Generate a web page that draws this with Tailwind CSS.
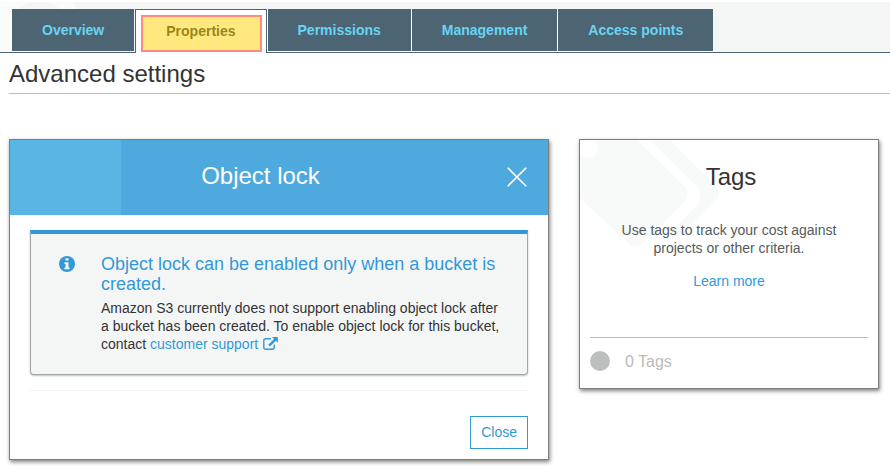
<!DOCTYPE html>
<html lang="en">
<head>
  <meta charset="UTF-8">
  <meta name="viewport" content="width=device-width, initial-scale=1.0" />
  <script src="https://cdn.jsdelivr.net/npm/@tailwindcss/browser@4"></script>
  <title>Bucket properties</title>
</head>
<body class="min-h-screen bg-white font-['Liberation_Sans',Arial,sans-serif] text-sm text-[#333333]">
<header class="relative mt-[2px] border-b border-[#4d6472] bg-[#f4f6f6]">
  <!-- bucket watermark behind the tabs -->
  <svg class="absolute top-0 left-0" width="84" height="50" viewBox="0 0 84 50" aria-hidden="true">
    <path d="M0 0H76Q83 4 82 12V50H0Z" fill="#fafcfb"/>
    <path d="M18 7Q23 2 31 0H47Q55 2 60 7Z" fill="#f4f6f6"/>
    <path d="M71 0Q76 3 76 7H82Q82 3 79 0Z" fill="#f4f6f6"/>
  </svg>
  <nav class="relative flex pt-[7px] pl-3 text-center font-bold text-[#68d4f4]">
    <a href="#" class="mr-px mb-px h-[42px] bg-[#4d6472] px-[30px] leading-[42px]">Overview</a>
    <a href="#" aria-current="page" class="-mb-px h-11 border border-b-0 border-[#4d6472] bg-white pt-[5px] pr-1 pl-[5px] text-[#998619]">
      <span class="block h-[37px] border-2 border-[#ff8a80] bg-[#ffe97f] pr-6 pl-[23px] leading-[29px]">Properties</span>
    </a>
    <div class="flex flex-wrap gap-px border-b border-white bg-white pl-px">
      <a href="#" class="bg-[#4d6472] px-[30px] leading-[42px]">Permissions</a>
      <a href="#" class="bg-[#4d6472] px-[30px] leading-[42px]">Management</a>
      <a href="#" class="bg-[#4d6472] px-[30px] leading-[42px]">Access points</a>
    </div>
  </nav>
</header>

<h1 class="ml-[9px] border-b border-[#bbbbbb] pt-1.5 pb-1 text-2xl leading-[30px]">Advanced settings</h1>

<main class="flex items-start gap-[30px] pt-[45px] pr-[11px] pb-2.5 pl-[9px]">
  <section class="flex-1 border border-[#7d7d7d] bg-white shadow-[1px_2px_4px_rgba(0,0,0,0.5)]">
    <div class="relative flex h-[75px] items-center bg-[#4ea9de] pr-[21px] pl-1 text-white">
      <div class="absolute inset-y-0 left-0 w-[111px] bg-[#58b5e4]"></div>
      <h2 class="relative flex-1 pb-1 text-center text-2xl">Object lock</h2>
      <button type="button" aria-label="Close panel" class="pb-0.5">
        <svg width="20" height="20" viewBox="0 0 20 20" fill="none" stroke="currentColor" stroke-width="1.6"><path d="M.8.8 19.2 19.2M19.2.8.8 19.2"/></svg>
      </button>
    </div>
    <div class="px-5 pt-[15px] pb-2.5">
      <div class="flex rounded-b border border-t-4 border-[#a1a6a6] border-t-[#3199d8] bg-[#f4f6f6] pt-5 pr-5 pb-[21px] pl-7 shadow-[0_1px_2px_rgba(0,0,0,0.25)]">
        <svg class="mt-0.5 mr-[26px] shrink-0" width="16" height="16" viewBox="0 0 16 16" aria-hidden="true">
          <circle cx="8" cy="8" r="8" fill="#3199d8"/>
          <path d="M6.5 2.2h3v2.4h-3zM5.4 6.2h4.1v5.2h1.1v1.8H5.4v-1.8h1.2V8H5.4z" fill="#f4f6f6"/>
        </svg>
        <div>
          <h3 class="mb-[5px] text-lg leading-5 text-[#3199d8]">Object lock can be enabled only when a bucket is created.</h3>
          <p class="leading-[18px]">Amazon S3 currently does not support enabling object lock after a bucket has been created. To enable object lock for this bucket, contact <a href="#" class="text-[#3199d8]">customer support<svg class="ml-[5px] inline align-[-1px]" width="15" height="13" viewBox="0 0 15 13" aria-hidden="true">
              <path d="M8 1.7H2.8Q.8 1.7.8 3.7v6.5q0 2 2 2h6.4q2 0 2-2V7.6" fill="none" stroke="#3199d8" stroke-width="1.4"/>
              <path d="M9 0h5.8v5.8l-2-2L7 9.4 5.3 7.7 11 2z" fill="#3199d8"/>
            </svg></a></p>
        </div>
      </div>
      <div class="mt-[15px] flex justify-end border-t border-[#f4f4f4] pt-[25px]">
        <button type="button" class="h-[33px] border border-[#3199d8] px-2.5 pb-0.5 text-[#3199d8]">Close</button>
      </div>
    </div>
  </section>

  <section class="relative w-[300px] border border-[#7d7d7d] bg-white px-2.5 pb-[15px] shadow-[1px_2px_4px_rgba(0,0,0,0.5)]">
    <!-- tag watermark -->
    <svg class="absolute top-0 left-0" width="142" height="110" viewBox="0 0 142 110" fill="#f8f9f9" aria-hidden="true">
      <path d="M0 0H57L104 46Q111 54 104 62L64 102Q55 110 47 102L0 58Z"/>
      <path d="M70 0H90L136 46Q143 54 136 61L102 95Q94 102 82 101L117 65Q124 57 117 47Z"/>
      <circle cx="7" cy="7" r="11" fill="#ffffff"/>
    </svg>
    <div class="relative text-center leading-[18px] text-[#545b5b]">
      <h2 class="pt-[21px] pl-1 text-2xl text-[#333333]">Tags</h2>
      <p class="mt-7 px-5">Use tags to track your cost against projects or other criteria.</p>
      <p class="mt-[15px] pb-[47px]"><a href="#" class="text-[#3199d8]">Learn more</a></p>
    </div>
    <div class="flex items-start gap-[15px] border-t border-[#bbbbbb] pt-3 text-base text-[#bbbbbb]">
      <span class="mt-px size-5 rounded-full bg-[#bbbfbd]"></span>
      <span class="leading-[23px]">0 Tags</span>
    </div>
  </section>
</main>
</body>
</html>
